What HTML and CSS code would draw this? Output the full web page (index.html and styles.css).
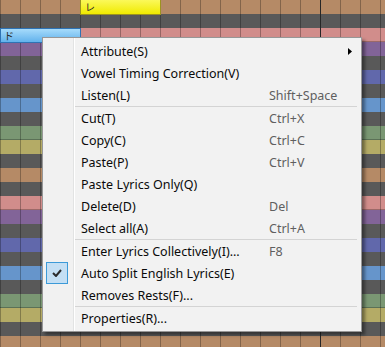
FILE: index.html
```html
<!DOCTYPE html>
<html lang="en">

<head>
    <meta charset="UTF-8">
    <meta name="viewport" content="width=device-width, initial-scale=1.0">
    <title>Piano Roll</title>
    <link rel="stylesheet" href="styles.css">
</head>

<body>
    <div class="roll">
        <div class="row key-d"></div>
        <div class="row black"></div>
        <div class="row key-c edge"></div>
        <div class="row key-b"></div>
        <div class="row black"></div>
        <div class="row key-a"></div>
        <div class="row black"></div>
        <div class="row key-g"></div>
        <div class="row black"></div>
        <div class="row key-f edge"></div>
        <div class="row key-e"></div>
        <div class="row black"></div>
        <div class="row key-d"></div>
        <div class="row black"></div>
        <div class="row key-c edge"></div>
        <div class="row key-b"></div>
        <div class="row black"></div>
        <div class="row key-a"></div>
        <div class="row black"></div>
        <div class="row key-g"></div>
        <div class="row black"></div>
        <div class="row key-f edge"></div>
        <div class="row key-e"></div>
        <div class="row black"></div>
        <div class="row key-d"></div>

        <div class="note note-re">レ</div>
        <div class="note note-do">ド</div>
    </div>

    <div class="menu">
        <div class="item">
            <span class="label">Attribute(S)</span>
            <svg class="arrow" width="4" height="7" viewBox="0 0 4 7"><polygon points="0,0 4,3.5 0,7" fill="#000"/></svg>
        </div>
        <div class="item"><span class="label">Vowel Timing Correction(V)</span></div>
        <div class="item"><span class="label">Listen(L)</span><span class="key">Shift+Space</span></div>
        <div class="sep"></div>
        <div class="item"><span class="label">Cut(T)</span><span class="key">Ctrl+X</span></div>
        <div class="item"><span class="label">Copy(C)</span><span class="key">Ctrl+C</span></div>
        <div class="item"><span class="label">Paste(P)</span><span class="key">Ctrl+V</span></div>
        <div class="item"><span class="label">Paste Lyrics Only(Q)</span></div>
        <div class="item"><span class="label">Delete(D)</span><span class="key">Del</span></div>
        <div class="item"><span class="label">Select all(A)</span><span class="key">Ctrl+A</span></div>
        <div class="sep"></div>
        <div class="item"><span class="label">Enter Lyrics Collectively(I)...</span><span class="key">F8</span></div>
        <div class="item checked">
            <span class="check">
                <svg width="10" height="8" viewBox="0 0 10 8"><path d="M1 4 L4 7 L9 1" fill="none" stroke="#2b2b2b" stroke-width="2"/></svg>
            </span>
            <span class="label">Auto Split English Lyrics(E)</span>
        </div>
        <div class="item"><span class="label">Removes Rests(F)...</span></div>
        <div class="sep"></div>
        <div class="item"><span class="label">Properties(R)...</span></div>
    </div>
</body>

</html>
```

FILE: styles.css
```css
body {
    margin: 0;
    padding: 0;
    overflow: hidden;
    font-family: "Noto Sans", "Noto Sans CJK JP", sans-serif;
}

/* piano roll */
.roll {
    position: relative;
    width: 385px;
    height: 347px;
    overflow: hidden;
}

.row {
    height: 14px;
    background-image:
        linear-gradient(to right, #262626 1px, transparent 1px),
        linear-gradient(to right, rgba(0, 0, 0, 0.28) 1px, transparent 1px);
    background-size: 1px 100%, 20px 100%;
    background-position: 320px 0, 0 0;
    background-repeat: repeat-y, repeat;
}

.edge {
    box-shadow: inset 0 -1px rgba(0, 0, 0, 0.25);
}

.black {
    background-color: #595959;
}

.key-d {
    background-color: #b58a66;
}

.key-c {
    background-color: #d18d8b;
}

.key-b {
    background-color: #826498;
}

.key-a {
    background-color: #6168ab;
}

.key-g {
    background-color: #6695cb;
}

.key-f {
    background-color: #7a9773;
}

.key-e {
    background-color: #b4ab66;
}

.note {
    position: absolute;
    box-sizing: border-box;
    height: 15px;
    padding-left: 4px;
    font-family: "Noto Sans CJK JP", sans-serif;
    font-size: 10px;
    line-height: 13px;
    color: #2a2a2a;
}

.note-re {
    left: 80px;
    top: 0;
    width: 81px;
    border: 1px solid #9c9320;
    border-top: none;
    background: linear-gradient(#fbf85a, #f0ea00);
}

.note-do {
    left: 0;
    top: 28px;
    width: 81px;
    padding-left: 3px;
    border: 1px solid #2f73b4;
    background: linear-gradient(#a6dbfb, #62b2ec);
}

/* context menu */
.menu {
    position: absolute;
    left: 42px;
    top: 37px;
    width: 314px;
    padding: 2px;
    border: 1px solid #979797;
    background-color: #f2f2f2;
    background-image: linear-gradient(to right, #f1f1f1 30px, #e2e3e3 30px, #e2e3e3 31px, #fff 31px, #fff 32px, transparent 32px);
    box-shadow: 3px 3px 3px rgba(0, 0, 0, 0.4);
    font-size: 12.5px;
    color: #0a0a0a;
}

.item {
    display: flex;
    align-items: center;
    height: 22px;
    padding-left: 36px;
}

.label {
    flex: 0 0 188px;
    white-space: nowrap;
}

.key {
    color: #5f5f5f;
    white-space: nowrap;
}

.arrow {
    margin-left: auto;
    margin-right: 7px;
}

.checked {
    padding-left: 1px;
}

.check {
    box-sizing: border-box;
    display: flex;
    align-items: center;
    justify-content: center;
    width: 22px;
    height: 22px;
    margin-right: 13px;
    border: 1px solid #3c9ad8;
    background-color: #c4dff4;
}

.sep {
    height: 1px;
    margin: 0 2px 0 30px;
    background-color: #d4d4d4;
}
```
